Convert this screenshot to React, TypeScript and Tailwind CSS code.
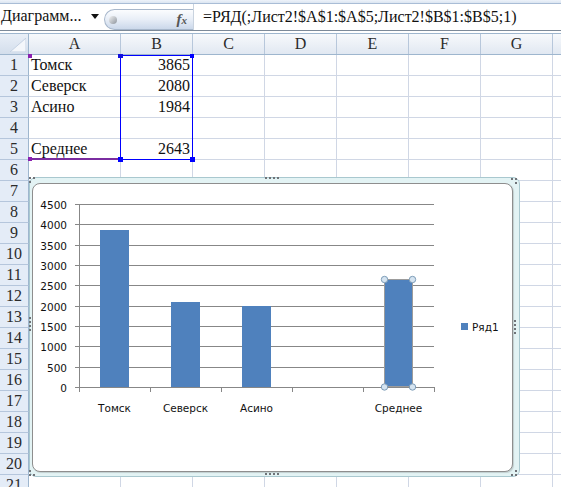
import React from "react";

const cols = [
  { k: "A", w: "w-[92px]" },
  { k: "B", w: "w-[72px]" },
  { k: "C", w: "w-[72px]" },
  { k: "D", w: "w-[72px]" },
  { k: "E", w: "w-[72px]" },
  { k: "F", w: "w-[72px]" },
  { k: "G", w: "w-[72px]" },
];

const data: Record<number, [string, string]> = {
  1: ["Томск", "3865"],
  2: ["Северск", "2080"],
  3: ["Асино", "1984"],
  5: ["Среднее", "2643"],
};

const rows = Array.from({ length: 21 }, (_, i) => i + 1);

function yv(v: number) {
  return 387 - (v * 183) / 4500;
}

function Chart() {
  const ticks = [0, 500, 1000, 1500, 2000, 2500, 3000, 3500, 4000, 4500];
  const bars = [
    { c: 114.5, v: 3865, l: "Томск" },
    { c: 185.5, v: 2080, l: "Северск" },
    { c: 256.5, v: 1984, l: "Асино" },
    { c: 398.5, v: 2643, l: "Среднее" },
  ];
  const font = "'DejaVu Sans', 'Liberation Sans', sans-serif";
  const dot = (x: number, y: number, k: string) => (
    <rect key={k} x={x} y={y} width={2} height={2} fill="#6f7378" />
  );
  return (
    <svg
      className="absolute left-0 top-0 pointer-events-none"
      width={561}
      height={487}
      viewBox="0 0 561 487"
    >
      {ticks.map((t) => {
        const y = Math.round(yv(t)) + 0.5;
        return (
          <g key={t}>
            <line x1={75} x2={434} y1={y} y2={y} stroke="#878787" strokeWidth={1} />
            <text
              x={67}
              y={y + 4}
              textAnchor="end"
              fontFamily={font}
              fontSize={10.5}
              fill="#111"
            >
              {t}
            </text>
          </g>
        );
      })}
      <line x1={79.5} x2={79.5} y1={204} y2={392} stroke="#878787" />
      {[79, 150, 221, 292, 363, 434].map((x) => (
        <line key={x} x1={x + 0.5} x2={x + 0.5} y1={387} y2={392} stroke="#878787" />
      ))}
      {bars.map((b, i) => {
        const top = Math.round(yv(b.v));
        const x = b.c - 14.5;
        return (
          <g key={i}>
            <rect x={x} y={top} width={29} height={387 - top} fill="#4f81bd" />
            <text
              x={b.c}
              y={412}
              textAnchor="middle"
              fontFamily={font}
              fontSize={10.5}
              fill="#111"
            >
              {b.l}
            </text>
          </g>
        );
      })}
      {/* selected point */}
      <rect
        x={384.5}
        y={279.5}
        width={28}
        height={107}
        fill="none"
        stroke="#9c9c9c"
        strokeWidth={1}
      />
      {[
        [384.5, 279.5],
        [412.5, 279.5],
        [384.5, 387],
        [412.5, 387],
      ].map(([cx, cy], i) => (
        <circle key={i} cx={cx} cy={cy} r={3.2} fill="#d5e4f1" stroke="#7d9cb7" strokeWidth={1} />
      ))}
      {/* legend */}
      <rect x={461} y={323} width={7} height={7} fill="#4f81bd" />
      <text x={472} y={331} fontFamily={font} fontSize={10.5} fill="#111">
        Ряд1
      </text>
      {/* frame handles */}
      {[265, 269, 273, 277].map((x) => dot(x, 177, "t" + x))}
      {[265, 269, 273, 277].map((x) => dot(x, 473, "b" + x))}
      {[317, 321, 325, 329].map((y) => dot(29, y, "l" + y))}
      {[320, 324, 328, 332].map((y) => dot(514, y, "r" + y))}
      {dot(29, 177, "c1")}
      {dot(33, 177, "c2")}
      {dot(29, 181, "c3")}
      {dot(511, 178, "c4")}
      {dot(515, 178, "c5")}
      {dot(515, 182, "c6")}
      {dot(29, 470, "c7")}
      {dot(29, 474, "c8")}
      {dot(33, 474, "c9")}
      {dot(515, 470, "c10")}
      {dot(515, 474, "c11")}
      {dot(511, 474, "c12")}
    </svg>
  );
}

export default function App() {
  return (
    <div
      className="relative w-[561px] h-[487px] overflow-hidden bg-white text-[#111]"
      style={{ fontFamily: "'Liberation Serif', 'Times New Roman', serif" }}
    >
      {/* ribbon bottom edge */}
      <div className="h-[4px] bg-gradient-to-b from-[#eef3fa] to-[#dbe5f1] border-b border-[#a9bdd6]" />
      {/* formula bar */}
      <div className="h-[27px] bg-white border-b border-[#7d8a99] flex">
        <div className="w-[104px] flex items-center justify-between pl-[1px] pr-[5px] pb-[2px]">
          <span className="text-[16px] leading-none">Диаграмм...</span>
          <svg width="8" height="5" viewBox="0 0 8 5">
            <path d="M0 0 L8 0 L4 5 Z" fill="#111" />
          </svg>
        </div>
        <div className="mt-[5px] h-[21px] w-[89px] rounded-l-full border border-r-0 border-[#a7b7cb] bg-gradient-to-b from-[#fbfcfe] via-[#e8eef7] to-[#cbd8ea] flex items-center justify-between pl-[4px] pr-[6px]">
          <div className="w-[8px] h-[8px] rounded-full bg-gradient-to-br from-[#f4f4f4] to-[#8e959e]" />
          <span className="text-[15px] italic font-bold text-[#555] leading-none">
            f<span className="text-[11px]">x</span>
          </span>
        </div>
        <div className="flex items-center pl-[9px] text-[16px] border-l border-[#c9d3df]">
          =РЯД(;Лист2!$A$1:$A$5;Лист2!$B$1:$B$5;1)
        </div>
      </div>
      <div className="h-[2px] bg-white" />
      {/* column header */}
      <div className="h-[22px] flex border-y border-[#9eb6ce] bg-gradient-to-b from-[#f7f9fc] to-[#e1e8f2]">
        <div className="w-[29px] border-r border-[#9eb6ce] flex items-end justify-end p-[2px] bg-gradient-to-b from-[#e9eff7] to-[#d3deec]">
          <svg width="16" height="14" viewBox="0 0 16 14">
            <path d="M16 0 L16 14 L0 14 Z" fill="#f4f7fb" stroke="#c4d1e2" />
          </svg>
        </div>
        {cols.map((c) => (
          <div
            key={c.k}
            className={`${c.w} shrink-0 border-r border-[#b7c7db] flex items-center justify-center text-[16px] text-[#2b2b2b]`}
          >
            {c.k}
          </div>
        ))}
        <div className="flex-1" />
      </div>
      {/* rows */}
      {rows.map((r) => {
        const d = data[r];
        return (
          <div key={r} className="h-[21px] flex">
            <div className="w-[29px] shrink-0 bg-[#e4ecf7] border-r border-r-[#9eb6ce] border-b border-b-[#b5c6dc] flex items-center justify-center text-[16px] text-[#2b2b2b]">
              {r}
            </div>
            {cols.map((c, i) => (
              <div
                key={c.k}
                className={`${c.w} shrink-0 border-r border-b border-[#d0d7e5] flex items-center text-[16px] ${
                  i === 1 ? "justify-end pr-[2px]" : "pl-[2px]"
                }`}
              >
                {d && i === 0 ? d[0] : d && i === 1 ? d[1] : ""}
              </div>
            ))}
            <div className="flex-1 border-b border-[#d0d7e5]" />
          </div>
        );
      })}

      {/* selection overlays */}
      <div className="absolute left-[29px] top-[158px] w-[92px] h-[2px] bg-[#7a2ca0]" />
      <div className="absolute left-[28px] top-[54px] w-[4px] h-[4px] bg-[#8a1fb0]" />
      <div className="absolute left-[28px] top-[157px] w-[4px] h-[4px] bg-[#8a1fb0]" />
      <div className="absolute left-[120px] top-[55px] w-[73px] h-[105px] border border-[#0000ff]" />
      <div className="absolute left-[118px] top-[54px] w-[5px] h-[4px] bg-[#1010e0]" />
      <div className="absolute left-[190px] top-[54px] w-[4px] h-[4px] bg-[#0000ff]" />
      <div className="absolute left-[118px] top-[157px] w-[5px] h-[5px] bg-[#0000ff]" />
      <div className="absolute left-[190px] top-[157px] w-[5px] h-[5px] bg-[#0000ff]" />

      {/* chart object */}
      <div className="absolute left-[29px] top-[177px] w-[491px] h-[300px] rounded-[7px] border border-[#a9c8cf] bg-[#e3f3f4] pl-[2px] pt-[5px] pr-[6px] pb-[4px]">
        <div className="w-full h-full rounded-[8px] border border-[#8e8e8e] bg-white shadow-[1px_1px_1px_rgba(0,0,0,0.15)]" />
      </div>
      <Chart />
    </div>
  );
}
